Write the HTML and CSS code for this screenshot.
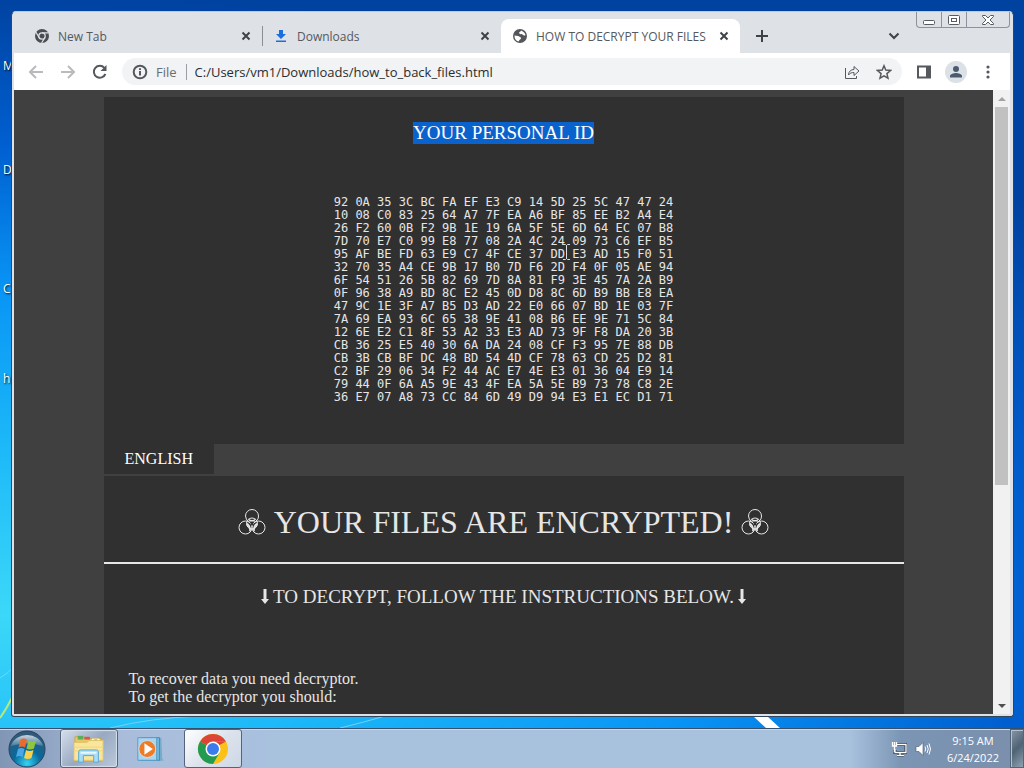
FILE: index.html
```
<!DOCTYPE html>
<html lang="en">
<head>
    <meta charset="UTF-8">
    <title>HOW TO DECRYPT YOUR FILES</title>
    <link rel="stylesheet" href="styles.css">
</head>
<body>
<div class="desktop">
    <svg class="wallpaper" viewBox="0 0 1024 768" preserveAspectRatio="none">
        <path d="M753 716h14l14 13h-14z" fill="#fff"/>
        <path d="M0 678Q8 674 16 664M340 728Q365 722 385 716M110 728Q150 718 200 716" fill="none" stroke="#6fd4fb" stroke-width="1"/>
        <path d="M0 718Q7 708 14 694" fill="none" stroke="#b8e87a" stroke-width="2"/>
    </svg>
    <span class="label label-m">M</span>
    <span class="label label-d">D</span>
    <span class="label label-c">C</span>
    <span class="label label-h">h</span>
    <div class="window">
        <div class="tabs">
            <div class="tab">
                <svg class="icon" viewBox="0 0 16 16">
                    <circle cx="8" cy="8" r="7" fill="#4a4e53"/>
                    <circle cx="8" cy="8" r="3.2" fill="none" stroke="#dee1e6" stroke-width="1.3"/>
                    <path d="M8 4.8h6.3M5.2 9.6L2 4.2M10.8 9.6L7.6 15" stroke="#dee1e6" stroke-width="1.2"/>
                </svg>
                <span class="name">New Tab</span>
                <button class="close" aria-label="Close tab"><svg viewBox="0 0 10 10"><path d="M1.5 1.5l7 7M8.5 1.5l-7 7"/></svg></button>
            </div>
            <div class="tab second">
                <svg class="icon" viewBox="0 0 16 16"><path d="M6 2h4v4h3l-5 5-5-5h3zM3 12.5h10V14H3z" fill="#1a6fdc"/></svg>
                <span class="name">Downloads</span>
                <button class="close" aria-label="Close tab"><svg viewBox="0 0 10 10"><path d="M1.5 1.5l7 7M8.5 1.5l-7 7"/></svg></button>
            </div>
            <div class="tab active">
                <svg class="icon" viewBox="0 0 16 16">
                    <circle cx="8" cy="8" r="7" fill="#53575c"/>
                    <path d="M9 2.4C11 3 13 5 13.5 7c-1 1-2 .5-2.7-.3C10 6 9 6.500 8 6L7 5c0-1.500 2-1.400 2-2.600zM2.500 7.500L6 8c1.500.300 1.500 1.500 3 1.500.500 1.500-1 1.500-1.500 2.500L6.500 13.500C4 13 2.300 10.500 2.500 7.500z" fill="#fff"/>
                </svg>
                <span class="name">HOW TO DECRYPT YOUR FILES</span>
                <button class="close" aria-label="Close tab"><svg viewBox="0 0 10 10"><path d="M1.5 1.5l7 7M8.5 1.5l-7 7"/></svg></button>
            </div>
            <button class="plus" aria-label="New tab"><svg viewBox="0 0 12 12"><path d="M6 0v12M0 6h12"/></svg></button>
            <button class="more" aria-label="Search tabs"><svg viewBox="0 0 12 8"><path d="M1.500 1.500L6 6l4.500-4.500"/></svg></button>
            <div class="controls">
                <button aria-label="Minimize"><svg viewBox="0 0 14 12"><rect x="1.500" y="6.500" width="11" height="4" rx="1"/></svg></button>
                <button aria-label="Maximize"><svg viewBox="0 0 14 12"><rect x="1.500" y="1.500" width="11" height="9" rx="1"/><rect x="4.500" y="4.500" width="5" height="3"/></svg></button>
                <button class="x" aria-label="Close"><svg viewBox="0 0 14 12"><path d="M1.500 1.500h3L7 4l2.500-2.500h3v1L9 6l3.500 3.500v1h-3L7 8l-2.500 2.500h-3v-1L5 6 1.500 2.500z"/></svg></button>
            </div>
        </div>
        <div class="toolbar">
            <button class="nav off" aria-label="Back"><svg viewBox="0 0 16 16"><path d="M15 8H2M8 2L2 8l6 6"/></svg></button>
            <button class="nav off" aria-label="Forward"><svg viewBox="0 0 16 16"><path d="M1 8h13M8 2l6 6-6 6"/></svg></button>
            <button class="nav" aria-label="Reload"><svg viewBox="0 0 16 16"><path d="M13.400 10a6 6 0 1 1-1-6.200" stroke-width="2"/><path d="M14.500 1v6h-6z" fill="#55595e" stroke="none"/></svg></button>
            <div class="omnibox">
                <svg class="info" viewBox="0 0 16 16"><circle cx="8" cy="8" r="6.300"/><path d="M8 7v4.500M8 4.200v1.800"/></svg>
                <label for="url">File</label>
                <input id="url" type="text" value="C:/Users/vm1/Downloads/how_to_back_files.html">
                <button class="nav thin" aria-label="Share"><svg viewBox="0 0 16 16"><path d="M1.500 4v10.500h11V12M4.500 11C4.500 7.500 7 5.500 10 5.500V2.500L15 7l-5 4.500V8.500C7.500 8.500 6 9 4.500 11z"/></svg></button>
                <button class="nav" aria-label="Bookmark"><svg viewBox="0 0 16 16"><path d="M8 1.800l1.800 4.300 4.700.4-3.600 3.100 1.100 4.600L8 11.800l-4 2.400 1.100-4.600L1.500 6.500l4.700-.4z" stroke-width="1.500"/></svg></button>
            </div>
            <button class="nav" aria-label="Side panel"><svg viewBox="0 0 16 16"><rect x="2" y="2.500" width="12" height="11" stroke-width="2"/><path d="M10 2h4v12h-4z" fill="#55595e" stroke="none"/></svg></button>
            <button class="avatar" aria-label="Profile"><svg viewBox="0 0 22 22"><circle cx="11" cy="8" r="3"/><path d="M5 16.500v-1.500c0-2 4-3 6-3s6 1 6 3v1.500z"/></svg></button>
            <button class="nav" aria-label="Menu"><svg viewBox="0 0 16 16"><g fill="#55595e" stroke="none"><circle cx="8" cy="3" r="1.600"/><circle cx="8" cy="8" r="1.600"/><circle cx="8" cy="13" r="1.600"/></g></svg></button>
        </div>
        <div class="view">
            <div class="page">
                <div class="box">
                    <div class="identi">
                        <h3><mark>YOUR PERSONAL ID</mark></h3>
                        <div class="key">
<pre>92 0A 35 3C BC FA EF E3 C9 14 5D 25 5C 47 47 24
10 08 C0 83 25 64 A7 7F EA A6 BF 85 EE B2 A4 E4
26 F2 60 0B F2 9B 1E 19 6A 5F 5E 6D 64 EC 07 B8
7D 70 E7 C0 99 E8 77 08 2A 4C 24 09 73 C6 EF B5
95 AF BE FD 63 E9 C7 4F CE 37 DD E3 AD 15 F0 51
32 70 35 A4 CE 9B 17 B0 7D F6 2D F4 0F 05 AE 94
6F 54 51 26 5B 82 69 7D 8A 81 F9 3E 45 7A 2A B9
0F 96 38 A9 BD 8C E2 45 0D D8 8C 6D B9 BB E8 EA
47 9C 1E 3F A7 B5 D3 AD 22 E0 66 07 BD 1E 03 7F
7A 69 EA 93 6C 65 38 9E 41 08 B6 EE 9E 71 5C 84
12 6E E2 C1 8F 53 A2 33 E3 AD 73 9F F8 DA 20 3B
CB 36 25 E5 40 30 6A DA 24 08 CF F3 95 7E 88 DB
CB 3B CB BF DC 48 BD 54 4D CF 78 63 CD 25 D2 81
C2 BF 29 06 34 F2 44 AC E7 4E E3 01 36 04 E9 14
79 44 0F 6A A5 9E 43 4F EA 5A 5E B9 73 78 C8 2E
36 E7 07 A8 73 CC 84 6D 49 D9 94 E3 E1 EC D1 71</pre>
                            <svg class="cursor" viewBox="0 0 7 16"><path d="M0 .5h2.500l1 1 1-1H7M3.500 1v14M0 15.500h2.500l1-1 1 1H7" fill="none" stroke="#ddd"/></svg>
                        </div>
                    </div>
                    <div class="langs"><button>ENGLISH</button></div>
                    <div class="content">
                        <h1>
                            <svg class="bio" viewBox="0 0 28 28"><g fill="none" stroke="#e6e6e6"><circle cx="14" cy="8" r="6.500" stroke-dasharray="36 4.800" stroke-dashoffset="-12.600"/><circle cx="7.500" cy="19.500" r="6.500"/><circle cx="20.500" cy="19.500" r="6.500"/><circle cx="14" cy="15.500" r="5.500"/></g><path d="M10.500 10.500q3.500 3 7 0l-1 3h-5zM8.500 14.500q4.500 2 4.500 8l-2 1q1-4-2.500-6.500zM19.500 14.500q-4.500 2-4.500 8l2 1q-1-4 2.500-6.500z" fill="#e6e6e6"/><circle cx="14" cy="16" r="1.600" fill="#303030"/></svg>
                            YOUR FILES ARE ENCRYPTED!
                            <svg class="bio" viewBox="0 0 28 28"><g fill="none" stroke="#e6e6e6"><circle cx="14" cy="8" r="6.500" stroke-dasharray="36 4.800" stroke-dashoffset="-12.600"/><circle cx="7.500" cy="19.500" r="6.500"/><circle cx="20.500" cy="19.500" r="6.500"/><circle cx="14" cy="15.500" r="5.500"/></g><path d="M10.500 10.500q3.500 3 7 0l-1 3h-5zM8.500 14.500q4.500 2 4.500 8l-2 1q1-4-2.500-6.500zM19.500 14.500q-4.500 2-4.500 8l2 1q-1-4 2.500-6.500z" fill="#e6e6e6"/><circle cx="14" cy="16" r="1.600" fill="#303030"/></svg>
                        </h1>
                        <h3>
                            <svg class="down" viewBox="0 0 8 16"><path d="M2.500 0h3v10H8l-4 5-4-5h2.500z" fill="#e6e6e6"/></svg>
                            TO DECRYPT, FOLLOW THE INSTRUCTIONS BELOW.
                            <svg class="down" viewBox="0 0 8 16"><path d="M2.500 0h3v10H8l-4 5-4-5h2.500z" fill="#e6e6e6"/></svg>
                        </h3>
                        <p>To recover data you need decryptor.<br>To get the decryptor you should:</p>
                    </div>
                </div>
            </div>
            <div class="scrollbar">
                <button aria-label="Scroll up"><svg viewBox="0 0 8 4"><path d="M0 4l4-4 4 4z" fill="#a3a3a3"/></svg></button>
                <div class="track"><div class="thumb"></div></div>
                <button aria-label="Scroll down"><svg viewBox="0 0 8 4"><path d="M0 0l4 4 4-4z" fill="#505050"/></svg></button>
            </div>
        </div>
    </div>
</div>
<div class="taskbar">
    <button class="start" aria-label="Start">
        <svg viewBox="0 0 38 38">
            <defs>
                <radialGradient id="orb" cx=".5" cy=".9" r=".85"><stop offset="0" stop-color="#35d4f5"/><stop offset=".45" stop-color="#08699c"/><stop offset="1" stop-color="#345878"/></radialGradient>
                <linearGradient id="gloss" x2="0" y2="1"><stop offset="0" stop-color="#fff" stop-opacity=".75"/><stop offset="1" stop-color="#fff" stop-opacity=".15"/></linearGradient>
            </defs>
            <circle cx="19" cy="19" r="18" fill="url(#orb)" stroke="#25435e"/>
            <path d="M3 16a16.500 14.500 0 0 1 32 0q-16-5-32 0z" fill="url(#gloss)"/>
            <path d="M12.500 9.500q3-2 6.500 0l-2 8q-3-2-6.500 0z" fill="#ee6a2c"/>
            <path d="M20.500 10.500q3.500 2 7.500 0l-2 8q-4 2-7.500 0z" fill="#8fc640"/>
            <path d="M10 19q3-2 6.500 0l-2 8q-3-2-6.500 0z" fill="#4aa8e8"/>
            <path d="M18 20q3.500 2 7.500 0l-2 8q-4 2-7.500 0z" fill="#fbd04a"/>
        </svg>
    </button>
    <button class="task open" aria-label="Windows Explorer">
        <svg viewBox="0 0 34 32">
            <path d="M2 3h8l2 2h18v24H2z" fill="#e8c864" stroke="#c9a850"/>
            <path d="M5 2h6v4H5z" fill="#5fae57"/><path d="M12 3h6v3h-6z" fill="#d75b44"/><path d="M20 5h8v3h-8z" fill="#fff"/><path d="M22 6h4v2h-4z" fill="#3f87d0"/>
            <path d="M1 9h14l2-2h15v21H1z" fill="#f8e69c" stroke="#dfc36c"/>
            <path d="M2 14h29M2 18h29" stroke="#f0d57d"/>
            <path d="M6 30V19q0-2 2-2h17q2 0 2 2v11h-5v-7H11v7z" fill="#a9dcf5" stroke="#56a8d4"/>
            <path d="M8 20h17" stroke="#e5f8ff" stroke-width="2"/>
        </svg>
    </button>
    <button class="task" aria-label="Windows Media Player">
        <svg viewBox="0 0 34 32">
            <path d="M10 4h18l1 23 2 1-6 1z" fill="#78abc9"/>
            <path d="M6 4h20v24H6z" fill="#73b8df" stroke="#4589b3"/><path d="M3 4h20v24H3z" fill="#a8d6ef" stroke="#559bc4"/>
            <circle cx="13" cy="16" r="9" fill="#ee7b25" stroke="#d4dee6"/><path d="M10 10l9 6-9 6z" fill="#fff"/>
        </svg>
    </button>
    <button class="task current" aria-label="Google Chrome">
        <svg viewBox="0 0 32 32">
            <circle cx="16" cy="16" r="15" fill="#fbc116"/>
            <path d="M16 16L3 8.500A15 15 0 0 1 29 8.500H16z" fill="#db4437"/>
            <path d="M3 8.500A15 15 0 0 0 16 31l6.500-11.300L16 16z" fill="#229a4f"/>
            <path d="M16 8.500h13L22.500 12z" fill="#db4437"/>
            <circle cx="16" cy="16" r="7.500" fill="#fff"/><circle cx="16" cy="16" r="6" fill="#3a7cec"/>
        </svg>
    </button>
    <div class="tray">
        <svg class="icon" viewBox="0 0 16 16"><path d="M5 3.500h10v8H4V9M9 11.500v3M6 14.500h7" fill="none" stroke="#2b3a4a" stroke-width="3"/><path d="M6 3.500h9v8H4V8M9 12v2.500M6 14.500h7M1.500 1v4h4V1M3.500 1v10" fill="none" stroke="#fff" stroke-width="1.300"/></svg>
        <svg class="icon" viewBox="0 0 16 16"><path d="M1 5.500h3L8 1.500v13l-4-4H1z" fill="#fff" stroke="#4a5b6c" stroke-width=".6"/><path d="M10 5.500q1.500 2.500 0 5M12 4q2.500 4 0 8M14 2.500q3 5.500 0 11" fill="none" stroke="#fff"/></svg>
        <div class="clock">9:15 AM<br>6/24/2022</div>
    </div>
    <button class="peek" aria-label="Show desktop"></button>
</div>
</body>
</html>
```
FILE: styles.css
```
*{
    margin: 0;
    padding: 0;
    box-sizing: border-box;
}
body{
    height: 100vh;
    display: flex;
    flex-direction: column;
    overflow: hidden;
    font-family: "Open Sans", "Noto Sans", sans-serif;
    font-size: 12px;
    background: radial-gradient(140% 85% at 0 80%, #3cd8f8 0, #1cb8f8 26%, #0894f5 50%, #005fd0 72%, #0042a0 95%);
}
button{
    border: none;
    background: none;
    font-family: inherit;
}
svg{
    display: block;
    flex-shrink: 0;
}
.icon{
    width: 16px;
    height: 16px;
}
.desktop{
    flex: 1;
    min-height: 0;
    display: flex;
    padding: 11px 10px 11px 11px;
}
.wallpaper{
    position: absolute;
    left: 0;
    top: 0;
    width: 100%;
    height: 100%;
}
.label{
    position: absolute;
    left: 3px;
    line-height: 16px;
    color: #fff;
    text-shadow: 1px 1px 2px #000;
}
.label-m{
    top: 58px;
}
.label-d{
    top: 162px;
}
.label-c{
    top: 281px;
}
.label-h{
    top: 371px;
}

/* browser window */
.window{
    position: relative;
    flex: 1;
    min-width: 0;
    display: flex;
    flex-direction: column;
    background: #dee1e6;
    border: 1px solid #31455c;
    border-top-color: #b9cbe0;
    border-radius: 5px 5px 3px 3px;
    padding: 0 3px 2px 2px;
    overflow: hidden;
}
.tabs{
    height: 41px;
    display: flex;
    align-items: flex-end;
    padding-left: 9px;
}
.tab{
    flex: 0 1 239px;
    min-width: 0;
    height: 34px;
    display: flex;
    align-items: center;
    gap: 8px;
    padding: 0 11px;
    color: #55595e;
}
.tab.second{
    background: linear-gradient(#8b8f94, #8b8f94) left center / 1px 20px no-repeat;
}
.tab.active{
    background: #fff;
    border-radius: 8px 8px 0 0;
}
.name{
    flex: 1;
    min-width: 0;
    white-space: nowrap;
    overflow: hidden;
}
.close{
    width: 10px;
    height: 10px;
}
.close svg{
    width: 10px;
    height: 10px;
}
.close path,.plus path,.more path{
    fill: none;
    stroke: #3f4348;
    stroke-width: 2;
}
.plus{
    width: 44px;
    height: 34px;
    display: flex;
    align-items: center;
    justify-content: center;
}
.plus svg{
    width: 12px;
}
.more{
    height: 34px;
    margin-left: auto;
    padding-right: 16px;
}
.more svg{
    width: 12px;
}
.controls{
    align-self: flex-start;
    display: flex;
    border: 1px solid #8d939c;
    border-top: none;
    border-radius: 0 0 4px 4px;
}
.controls button{
    width: 25px;
    height: 15px;
    display: flex;
    align-items: center;
    justify-content: center;
    border-right: 1px solid #8d939c;
}
.controls .x{
    width: 42px;
    border-right: none;
}
.controls svg{
    width: 14px;
    height: 12px;
    fill: #fff;
    stroke: #565b63;
}
.toolbar{
    height: 37px;
    display: flex;
    align-items: center;
    gap: 4px;
    padding: 0 8px;
    background: #fff;
}
.nav{
    width: 28px;
    height: 28px;
    display: flex;
    align-items: center;
    justify-content: center;
}
.nav svg{
    width: 16px;
    height: 16px;
    fill: none;
    stroke: #55595e;
    stroke-width: 2;
}
.nav.off svg{
    stroke: #b8babd;
}
.nav.thin svg{
    stroke-width: 1;
}
.omnibox{
    flex: 1;
    min-width: 0;
    height: 27px;
    display: flex;
    align-items: center;
    gap: 4px;
    padding: 0 4px 0 10px;
    margin: 0 4px;
    background: #f1f3f4;
    border-radius: 14px;
}
.info{
    width: 16px;
    height: 16px;
    fill: none;
    stroke: #55595e;
    stroke-width: 2;
}
.omnibox label{
    padding: 0 9px 0 4px;
    border-right: 1px solid #9a9da1;
    color: #6a6d71;
    font-size: 13px;
    line-height: 16px;
}
.omnibox input{
    flex: 1;
    min-width: 0;
    padding-left: 4px;
    border: none;
    outline: none;
    background: none;
    font-family: inherit;
    font-size: 13px;
    color: #2b2d30;
}
.avatar{
    width: 22px;
    height: 22px;
    margin: 0 3px;
    border-radius: 50%;
    background: #dce1e8;
}
.avatar svg{
    width: 22px;
    fill: #4c5a6e;
}

/* ransom note */
.view{
    flex: 1;
    min-height: 0;
    display: flex;
}
.page{
    flex: 1;
    min-width: 0;
    padding-top: 7px;
    overflow: hidden;
    background: #404040;
    color: #e6e6e6;
    font-family: "Liberation Serif", "Times New Roman", serif;
    font-size: 16px;
}
.box{
    max-width: 800px;
    margin: 0 auto;
}
.identi{
    display: flex;
    flex-direction: column;
    align-items: center;
    padding: 25px 0 40px;
    background: #303030;
}
h1,h3{
    font-weight: normal;
}
h3{
    font-size: 19px;
    line-height: 22px;
}
mark{
    display: block;
    background: #0a63cc;
    color: #fff;
}
.key{
    position: relative;
    margin-top: 52px;
}
pre{
    font-family: "DejaVu Sans Mono", monospace;
    font-size: 12px;
    line-height: 13px;
}
.cursor{
    position: absolute;
    left: 229px;
    top: 48px;
    width: 7px;
    height: 16px;
}
.langs{
    display: flex;
    padding-bottom: 2px;
}
.langs button{
    height: 30px;
    padding: 0 21px;
    background: #303030;
    color: #fff;
    font-size: 16px;
    font-family: inherit;
}
.content{
    background: #303030;
    padding-bottom: 40px;
}
.content h1,.content h3{
    display: flex;
    align-items: center;
    justify-content: center;
}
.content h1{
    gap: 8px;
    padding: 27px 0 21px;
    border-bottom: 2px solid #e6e6e6;
    font-size: 32px;
    line-height: 38px;
}
.content h3{
    gap: 4px;
    padding: 22px 0;
}
.bio{
    width: 28px;
    height: 28px;
}
.down{
    width: 8px;
    height: 16px;
}
.content p{
    padding: 40px 25px;
    line-height: 18px;
}
.scrollbar{
    width: 17px;
    display: flex;
    flex-direction: column;
    background: #f1f1f1;
}
.scrollbar button{
    height: 17px;
    display: flex;
    align-items: center;
    justify-content: center;
}
.scrollbar svg{
    width: 8px;
}
.track{
    flex: 1;
    padding: 0 2px;
}
.thumb{
    height: 64%;
    background: #c1c1c1;
}

/* taskbar */
.taskbar{
    position: relative;
    height: 40px;
    display: flex;
    gap: 4px;
    background: linear-gradient(to right, #8195b4, #a9bddb 12%, #a8c2de 30%, #a8c2de 83%, #7b95b4 88%, #7a8fab);
    border-top: 1px solid #34506c;
    box-shadow: inset 0 1px #c8d9ea;
}
.start{
    width: 56px;
    padding-left: 8px;
}
.start svg{
    width: 38px;
}
.task{
    width: 58px;
    display: flex;
    align-items: center;
    justify-content: center;
    border-radius: 3px;
}
.task.open{
    border: 1px solid #54657b;
    background: linear-gradient(135deg, #d6deeb, #98a9c1 50%, #bac8da);
    box-shadow: inset 0 0 1px 1px #d8e2ee;
}
.task.current{
    border: 1px solid #54657b;
    background: linear-gradient(135deg, #fff, #dde3ed 50%, #cdd8e6);
}
.task svg{
    width: 32px;
    height: 32px;
}
.tray{
    margin-left: auto;
    display: flex;
    align-items: center;
    gap: 8px;
    color: #fff;
}
.clock{
    padding: 0 7px 0 8px;
    text-align: center;
    font-size: 11px;
    line-height: 17px;
}
.peek{
    width: 14px;
    border: 1px solid #53657a;
    background: linear-gradient(135deg, #8797a7, #4e6375 50%, #8fa2b3);
    box-shadow: inset 1px 1px #b4c2d0;
}
```
